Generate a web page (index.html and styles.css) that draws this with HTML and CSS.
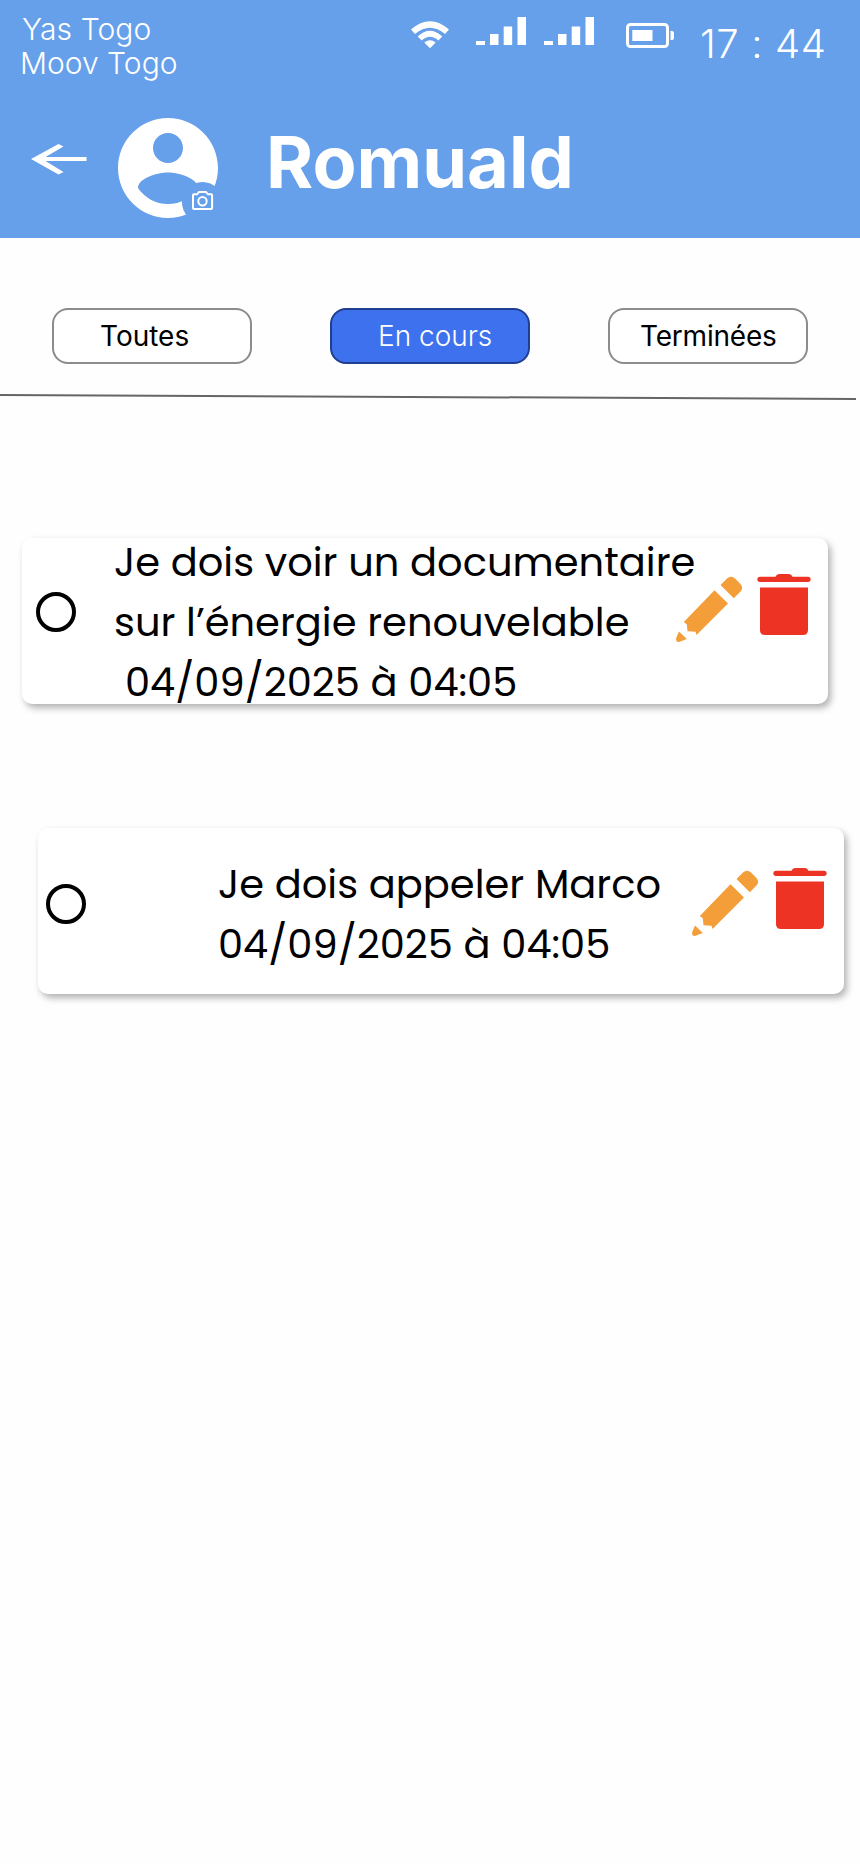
FILE: index.html
```html
<!DOCTYPE html>
<html lang="fr">
<head>
<meta charset="utf-8">
<title>Tâches de Romuald</title>
<link rel="stylesheet" href="styles.css">
</head>
<body>
<svg class="defs" width="0" height="0">
  <symbol id="signal" viewBox="0 0 50 28"><path d="M0 24h9v4H0zM14 17h8.500v11H14zM27.700 9.500h8.500v18.500h-8.500zM41.500 0H50v28h-8.500z"/></symbol>
  <symbol id="pencil" viewBox="0 0 67 67">
    <path d="M44.500 9L51 2.500Q55 -1 59 2.500L64 7.500Q68 12 64.500 15.500L57.800 22.200zM38.500 14.200L52 27.500L20.500 59L19.500 55.800L11.500 55.200L10.800 48.200L7.800 46zM3 55.500L10.800 63L3.500 65.800Q-.5 66.500 .2 62z"/>
  </symbol>
  <symbol id="trash" viewBox="0 0 54 62">
    <path d="M3 2.700H18.500Q19.500 0 22 0H32Q34.500 0 35.500 2.700H51a2.650 2.650 0 0 1 0 5.300H3a2.650 2.650 0 0 1 0-5.300zM3 13.500H51V56q0 5-5 5H8q-5 0-5-5z"/>
  </symbol>
</svg>
<header class="header">
  <div class="status">
    <div class="carriers"><span class="carrier yas">Yas Togo</span><span class="carrier moov">Moov Togo</span></div>
    <svg class="wifi" width="40" height="28" viewBox="0 0 40 28">
      <path d="M1 8.500Q20-8 39 8.500L35 13Q20 .5 5 13zM7.700 15.500Q20 4 32.300 15.500L28.300 19.500Q20 12 11.700 19.500zM14.300 21.500Q20 17 25.700 21.500L20 27.300z"/>
    </svg>
    <svg class="signal" width="50" height="28"><use href="#signal"/></svg>
    <svg class="signal second" width="50" height="28"><use href="#signal"/></svg>
    <svg class="battery" width="48" height="25" viewBox="0 0 48 25">
      <rect x="1.500" y="1.500" width="40" height="22" rx="3" fill="none" stroke="#fff" stroke-width="3"/>
      <path d="M6.300 7h20.200v11H6.300zM44.500 8h1.500q2 0 2 2v5q0 2-2 2h-1.500z"/>
    </svg>
    <span class="clock">17 : 44</span>
  </div>
  <div class="profile">
    <svg class="back" width="56" height="31" viewBox="0 0 56 31"><path d="M27.500 0L32.500 2.500L14.500 13H55.500V17H14.500L32.500 28L27.500 30.500L0 15z"/></svg>
    <svg class="avatar" width="100" height="100" viewBox="0 0 100 100">
      <g transform="scale(5)"><path d="M10 0C4.480 0 0 4.480 0 10s4.480 10 10 10 10-4.480 10-10S15.520 0 10 0zm0 3c1.660 0 3 1.340 3 3s-1.340 3-3 3-3-1.340-3-3 1.340-3 3-3zm0 14.200c-2.500 0-4.710-1.280-6-3.220.03-1.990 4-3.080 6-3.080 1.990 0 5.970 1.090 6 3.080-1.290 1.940-3.500 3.220-6 3.220z"/></g>
      <circle class="cutout" cx="84.500" cy="84.500" r="20.500"/>
      <g fill="none" stroke="#fff" stroke-width="2"><path d="M75.800 76.300H79L81 74H88L90 76.300H93.300Q94.100 76.300 94.100 77.300V90Q94.100 91 93.100 91H76Q75 91 75 90V77.300Q75 76.300 75.800 76.300z"/><circle cx="84.500" cy="83.300" r="4.200"/></g>
    </svg>
    <h1 class="name">Romuald</h1>
  </div>
</header>
<nav class="filters">
  <button class="filter all"><span>Toutes</span></button>
  <button class="filter active"><span>En cours</span></button>
  <button class="filter done"><span>Terminées</span></button>
</nav>
<svg class="divider" width="860" height="8" viewBox="0 0 860 8"><path d="M0 2L856 6" stroke="#666" stroke-width="2"/></svg>
<main class="tasks">
  <article class="task first">
    <span class="check"></span>
    <div class="copy"><span>Je dois voir un documentaire</span><span>sur l’énergie renouvelable</span><span class="date">04/09/2025 à 04:05</span></div>
    <div class="actions"><svg class="pencil" width="67" height="67"><use href="#pencil"/></svg><svg class="trash" width="54" height="62"><use href="#trash"/></svg></div>
  </article>
  <article class="task second-task">
    <span class="check"></span>
    <div class="copy"><span>Je dois appeler Marco</span><span class="date">04/09/2025 à 04:05</span></div>
    <div class="actions"><svg class="pencil" width="67" height="67"><use href="#pencil"/></svg><svg class="trash" width="54" height="62"><use href="#trash"/></svg></div>
  </article>
</main>
</body>
</html>
```
FILE: styles.css
```css
* { box-sizing: border-box; }
body { margin: 0; width: 860px; min-height: 1864px; background: #fefefe; color: #000; font-family: Inter, "Liberation Sans", sans-serif; overflow-x: hidden; }
.defs { display: none; }
svg { display: block; flex: none; }
.header { height: 238px; background: #669fea; color: #fff; fill: #fff; }
.status { display: flex; align-items: flex-start; height: 118px; white-space: nowrap; }
.carriers { display: flex; flex-direction: column; width: 388px; padding: 12px 0 0 20px; margin-right: 22px; font-size: 30px; font-weight: 300; line-height: 34px; }
.yas { padding-left: 2px; letter-spacing: .1px; }
.wifi { margin-top: 21px; }
.signal { margin: 17px 0 0 26px; }
.signal.second { margin-left: 18px; }
.battery { margin: 23px 0 0 32px; }
.clock { margin: 20px 0 0 26px; font-size: 40px; font-weight: 300; line-height: 48px; letter-spacing: .6px; }
.profile { display: flex; height: 100px; padding-left: 31px; }
.back { margin-top: 26px; }
.avatar { margin-left: 31px; }
.cutout { fill: #669fea; }
.name { margin: 0 0 0 48px; font-size: 72px; font-weight: 700; line-height: 87px; }
.filters { display: flex; gap: 78px; padding: 70px 0 0 52px; }
.filter { width: 200px; height: 56px; padding: 0; border: 2px solid #8c8c8c; border-radius: 16px; background: #fff; color: #000; font: 400 28px/34px Inter, sans-serif; text-align: left; white-space: nowrap; }
.all { padding-left: 46px; }
.active { padding-left: 46px; border-color: #213f91; background: #3e71ed; color: #fff; font-weight: 300; }
.done { padding-left: 30px; letter-spacing: -.2px; }
.divider { margin-top: 29px; }
.tasks { padding: 137px 0 0 22px; }
.task { display: flex; width: 806px; height: 166px; border-radius: 10px; background: #fff; box-shadow: 3px 4px 7px rgba(0,0,0,.3); }
.check { flex: none; width: 40px; height: 40px; border: 4px solid #000; border-radius: 50%; margin: 54px 0 0 14px; }
.copy { display: flex; flex-direction: column; width: 562px; margin-left: 38px; font-family: Poppins, Inter, sans-serif; font-size: 40px; line-height: 60px; white-space: nowrap; }
.first .copy { margin-top: -6px; }
.first .date { padding-left: 11px; }
.actions { display: flex; gap: 14px; margin-top: 36px; }
.pencil { margin-top: 2px; fill: #f39e39; }
.trash { fill: #ed3324; }
.second-task { margin: 124px 0 0 16px; }
.second-task .check { margin: 56px 0 0 8px; }
.second-task .copy { width: 464px; margin: 26px 0 0 132px; }
.second-task .actions { margin: 40px 0 0 10px; }
```
